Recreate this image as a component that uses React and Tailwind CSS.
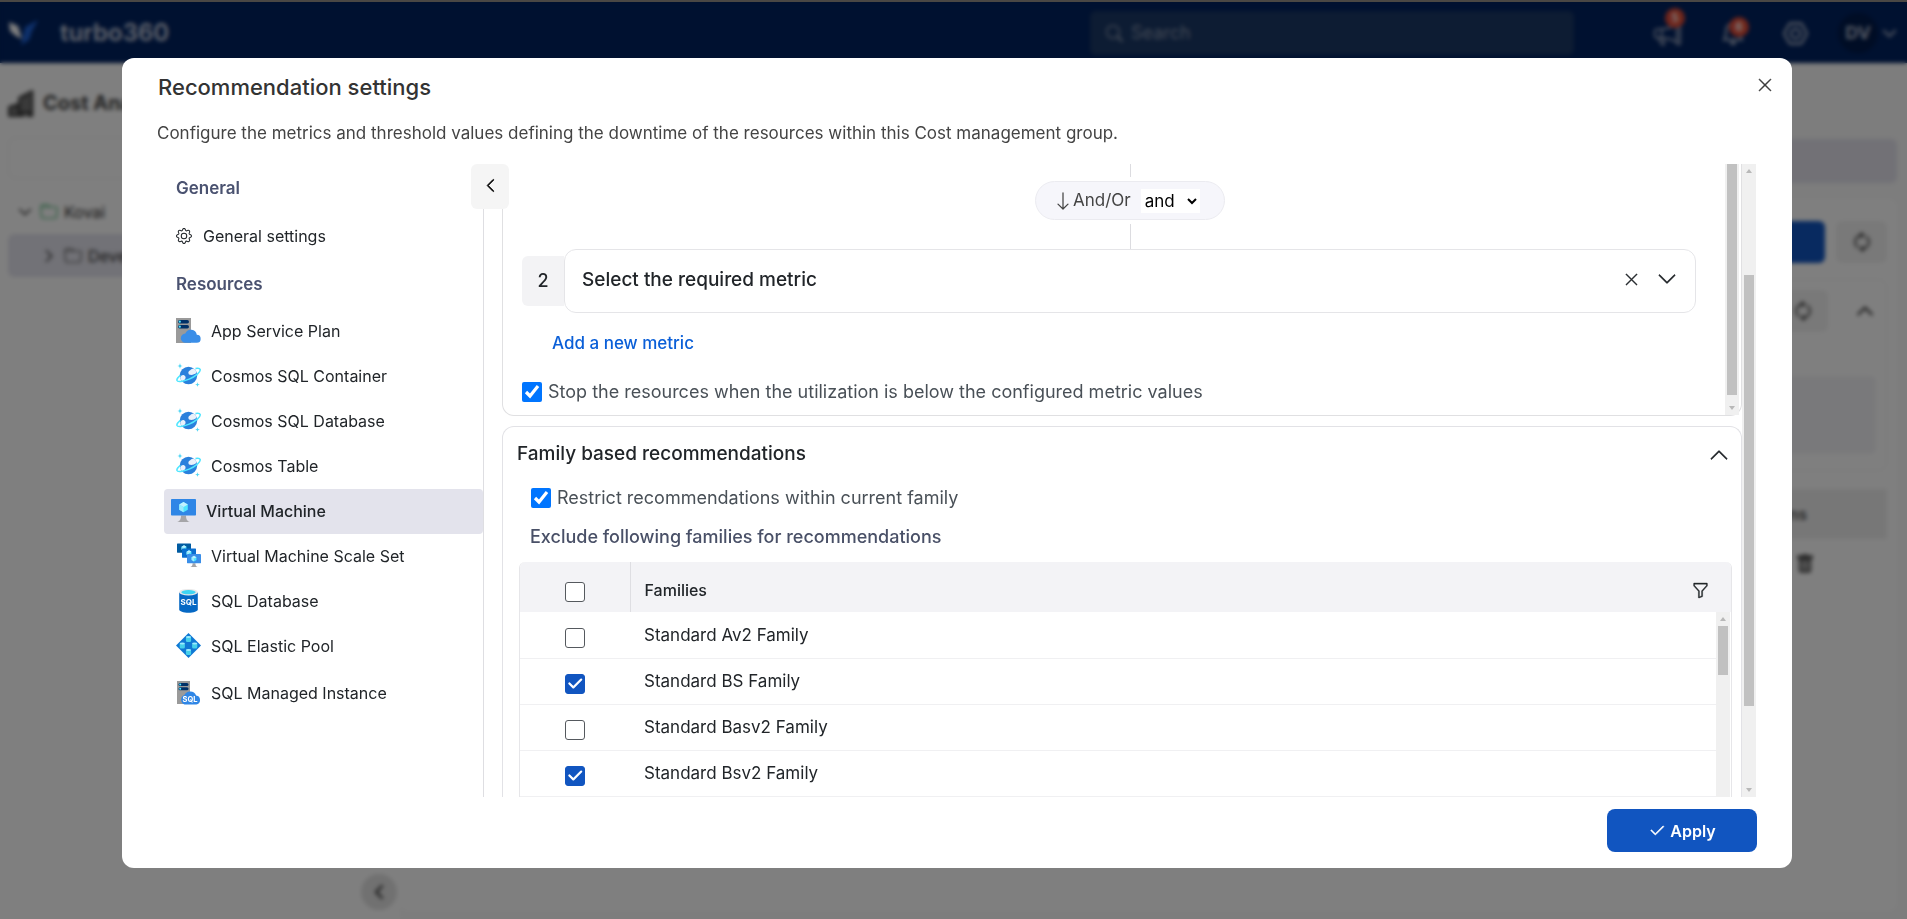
import { useState } from 'react'
import {
  BsArrowDown, BsCheck2, BsChevronDown, BsChevronLeft, BsChevronRight, BsChevronUp,
  BsFolder, BsFunnel, BsGear, BsMegaphone, BsBell, BsNut, BsSearch, BsTrashFill, BsXLg,
  BsArrowRepeat, BsBuildingsFill,
} from 'react-icons/bs'

const resources = [
  { name: 'App Service Plan', icon: AppServiceIcon },
  { name: 'Cosmos SQL Container', icon: CosmosIcon },
  { name: 'Cosmos SQL Database', icon: CosmosIcon },
  { name: 'Cosmos Table', icon: CosmosIcon },
  { name: 'Virtual Machine', icon: VmIcon },
  { name: 'Virtual Machine Scale Set', icon: ScaleSetIcon },
  { name: 'SQL Database', icon: SqlDbIcon },
  { name: 'SQL Elastic Pool', icon: ElasticPoolIcon },
  { name: 'SQL Managed Instance', icon: ManagedInstanceIcon },
]

const families = [
  { name: 'Standard Av2 Family', excluded: false },
  { name: 'Standard BS Family', excluded: true },
  { name: 'Standard Basv2 Family', excluded: false },
  { name: 'Standard Bsv2 Family', excluded: true },
]

export default function App() {
  return (
    <div className="relative h-screen overflow-hidden bg-white font-['Inter',sans-serif] text-[#212529]">
      <Page />
      <div className="absolute inset-x-0 top-0 h-0.5 bg-[#4a4744]" />
      <div className="absolute inset-x-0 top-0.5 bottom-0 flex bg-black/50 pt-14 pr-[115px] pb-[51px] pl-[122px] backdrop-blur-[2px]">
        <SettingsDialog />
      </div>
    </div>
  )
}

function SettingsDialog() {
  const [selected, setSelected] = useState('Virtual Machine')

  return (
    <section role="dialog" aria-labelledby="dialog-title" className="flex min-w-0 flex-1 flex-col rounded-xl bg-white">
      <header className="flex items-center justify-between pt-[11px] pr-[19px] pl-9">
        <h1 id="dialog-title" className="text-[22px] leading-9 font-medium text-[#333]">Recommendation settings</h1>
        <button aria-label="Close" className="pb-1 text-[#333]"><BsXLg size={16} strokeWidth={0.5} /></button>
      </header>
      <p className="mt-3.5 pl-[35px] text-[17px] leading-7 text-[#444]">
        Configure the metrics and threshold values defining the downtime of the resources within this Cost management group.
      </p>

      <div className="mt-[17px] flex min-h-0 flex-1 pr-9 pl-[42px]">
        <Sidebar selected={selected} onSelect={setSelected} />
        <div className="flex min-w-0 flex-1 flex-col overflow-hidden pl-[18px]">
          <MetricsCard />
          <FamiliesCard />
        </div>
        <Scrollbar before={97} thumb={431} />
      </div>

      <footer className="flex justify-end px-[35px] pt-3 pb-4">
        <button className="flex h-[43px] w-[150px] items-center justify-center gap-1 rounded-lg bg-[#1155c0] text-base font-semibold text-white">
          <BsCheck2 size={18} strokeWidth={0.5} /> Apply
        </button>
      </footer>
    </section>
  )
}

function Sidebar({ selected, onSelect }) {
  return (
    <div className="relative w-80 shrink-0">
      <nav className="h-full border-r border-[#dedee2] text-base">
        <h2 className="pl-3 text-[17px] leading-[48px] font-semibold text-[#4a5270]">General</h2>
        <button className="flex h-[50px] w-full items-center gap-[11px] pb-0.5 pl-3"><BsGear size={16} /> General settings</button>
        <h2 className="pl-3 text-[17px] leading-[45px] font-semibold text-[#4a5270]">Resources</h2>
        <ul className="mt-0.5">
          {resources.map(({ name, icon: Icon }) => (
            <li key={name} className="last:pt-0.5">
              <button
                onClick={() => onSelect(name)}
                className={`flex h-[45px] w-full items-center gap-[10px] rounded-sm pb-0.5 ${name === selected ? 'bg-[#e3e3ec] pl-[7px] font-medium' : 'pl-3'}`}
              >
                <Icon /> {name}
              </button>
            </li>
          ))}
        </ul>
      </nav>
      <button aria-label="Collapse" className="absolute top-0 -right-[25px] z-10 flex h-[45px] w-[38px] items-center justify-center rounded-md bg-[#f5f5f5] pb-0.5 text-black">
        <BsChevronLeft size={15} strokeWidth={0.8} />
      </button>
    </div>
  )
}

function MetricsCard() {
  return (
    <div className="flex h-[252px] shrink-0 rounded-b-xl border-x border-b border-[#e0e0e2] pr-0.5">
      <div className="min-w-0 flex-1 pr-[29px] pl-[19px]">
        <div className="flex flex-col items-center pl-[42px]">
          <div className="h-[13px] w-px bg-[#dcdce0]" />
          <div className="my-1 flex h-[39px] w-[190px] items-center rounded-full border border-[#ebebf0] bg-[#f6f6fb] pl-[17px] text-[#444]">
            <BsArrowDown size={20} />
            <label htmlFor="operator" className="text-[17px]">And/Or</label>
            <select id="operator" defaultValue="and" className="ml-[10px] h-6 w-[59px] bg-white text-[17px] text-black">
              <option>and</option>
              <option>or</option>
            </select>
          </div>
          <div className="h-[25px] w-px bg-[#dcdce0]" />
        </div>
        <div className="flex items-center">
          <span className="flex h-[50px] w-[42px] items-center justify-center rounded-l-md bg-[#f3f3f5] text-lg font-medium">2</span>
          <div className="flex h-16 flex-1 items-center rounded-xl border border-[#e5e5e8] pr-[18px] pb-0.5 pl-[17px]">
            <span className="flex-1 text-[19px] font-medium">Select the required metric</span>
            <button aria-label="Remove metric" className="mr-[18px] pb-0.5"><BsXLg size={15} strokeWidth={0.5} /></button>
            <button aria-label="Expand metric" className="pb-0.5"><BsChevronDown size={20} strokeWidth={0.4} /></button>
          </div>
        </div>
        <a href="#add" className="ml-[30px] inline-block text-[17px] leading-[60px] font-medium text-[#0a5fd8]">Add a new metric</a>
        <label className="mt-[5px] flex items-center gap-[6px] text-lg text-[#495057]">
          <input type="checkbox" defaultChecked className="size-5 shrink-0 accent-[#0075ff]" />
          Stop the resources when the utilization is below the configured metric values
        </label>
      </div>
      <Scrollbar before={0} thumb={231} top={false} />
    </div>
  )
}

function FamiliesCard() {
  return (
    <div className="mt-[10px] shrink-0 rounded-t-xl border border-b-0 border-[#e2e2e6] px-[9px]">
      <div className="flex h-[57px] items-center justify-between pr-[3px] pb-0.5 pl-[5px]">
        <h2 className="text-[19px] font-medium">Family based recommendations</h2>
        <button aria-label="Collapse section"><BsChevronUp size={20} strokeWidth={0.4} /></button>
      </div>
      <label className="ml-[19px] flex h-7 items-center gap-[6px] text-lg text-[#495057]">
        <input type="checkbox" defaultChecked className="size-5 accent-[#0075ff]" />
        Restrict recommendations within current family
      </label>
      <p className="ml-[18px] text-lg leading-[50px] font-medium text-[#495067]">Exclude following families for recommendations</p>
      <div className="ml-[7px] overflow-hidden rounded-t-md border-x border-[#e6e6e9]">
        <div className="flex">
          <table className="flex-1 border-collapse text-left text-[17px]">
            <thead>
              <tr className="h-[50px] bg-[#f3f3f6]">
                <th className="w-[110px] border-r border-[#dedee2] pt-2.5 pl-[45px]"><TickBox label="Select all families" /></th>
                <th className="pt-1.5 pl-[14px] text-base font-medium">Families</th>
              </tr>
            </thead>
            <tbody>
              {families.map((f) => (
                <tr key={f.name} className="h-[46px] border-b border-[#f0f0f2]">
                  <td className="pt-1.5 pl-[45px]"><TickBox label={f.name} checked={f.excluded} /></td>
                  <td className="pt-0.5 pl-[14px]">{f.name}</td>
                </tr>
              ))}
            </tbody>
          </table>
          <div className="flex flex-col">
            <div className="flex h-[50px] items-center bg-[#f3f3f6] pt-1.5">
              <button aria-label="Filter" className="-ml-6 pr-[22px]"><BsFunnel size={17} strokeWidth={0.4} /></button>
            </div>
            <div className="flex flex-1">
              <Scrollbar before={0} thumb={49} bottom={false} />
            </div>
          </div>
        </div>
      </div>
    </div>
  )
}

function TickBox({ label, checked = false }) {
  return (
    <span className="grid w-5">
      <input
        type="checkbox"
        aria-label={label}
        defaultChecked={checked}
        className="peer col-start-1 row-start-1 size-5 appearance-none rounded-[3px] border border-[#55595e] bg-white checked:border-[#1155c0] checked:bg-[#1155c0]"
      />
      <BsCheck2 size={18} strokeWidth={0.9} className="pointer-events-none invisible col-start-1 row-start-1 place-self-center text-white peer-checked:visible" />
    </span>
  )
}

function Scrollbar({ before, thumb, top = true, bottom = true }) {
  return (
    <div aria-hidden="true" className="flex w-[14px] flex-none flex-col items-center bg-[#f0f0f0]">
      {top && <Arrow points="0,4 3,0 6,4" />}
      <div className="flex w-[10px] flex-1 flex-col">
        <div style={{ height: before }} />
        <div className="bg-[#c1c1c1]" style={{ height: thumb }} />
      </div>
      {bottom && <Arrow points="0,0 3,4 6,0" />}
    </div>
  )
}

function Arrow({ points }) {
  return (
    <span className="flex h-[14px] items-center">
      <svg width="6" height="4" viewBox="0 0 6 4"><polygon points={points} fill="#b8b8b8" /></svg>
    </span>
  )
}

/* Cost page behind the dialog */

function Page() {
  return (
    <div className="flex h-full flex-col" aria-hidden="true">
      <header className="flex h-[63px] shrink-0 items-center bg-[#002260] pt-[3px] pl-2 text-white">
        <svg width="30" height="28" viewBox="0 0 30 28">
          <path d="M1 3l9 4 4 13-6-3-6-5z" fill="#fff" />
          <path d="M30 1L17 8l-4 18 8-5 3-9z" fill="#1d62d8" />
        </svg>
        <span className="ml-[22px] text-2xl font-semibold text-[#c8cede]">turbo360</span>
        <div className="mr-20 ml-auto flex h-11 w-[484px] items-center gap-2 rounded-md bg-[#1a3866] pl-4 text-[#8693ab]">
          <BsSearch size={17} strokeWidth={0.5} />
          <span className="text-lg">Search</span>
        </div>
        <div className="flex items-center text-[#a9b3c8]">
          <span className="relative"><BsMegaphone size={27} /><Badge className="-top-3 -right-1">5</Badge></span>
          <span className="relative ml-10"><BsBell size={24} strokeWidth={0.4} /><Badge className="-top-1 -right-1">6</Badge></span>
          <BsNut size={25} strokeWidth={0.6} className="ml-[38px]" />
          <span className="ml-[30px] flex size-10 items-center justify-center rounded-full bg-[#001a4a] text-lg font-bold">DV</span>
          <BsChevronDown size={15} strokeWidth={1.2} className="mr-[10px] ml-1" />
        </div>
      </header>
      <div className="flex min-h-0 flex-1">
        <aside className="flex w-[400px] flex-col pl-2 text-[#333]">
          <div className="mt-[22px] flex h-9 items-center gap-2 text-xl font-bold text-[#444]"><BsBuildingsFill size={27} /> Cost Analysis</div>
          <div className="mt-4 h-[42px] rounded-lg border border-[#ececec]" />
          <div className="mt-[11px] flex h-11 items-center pl-2.5"><BsChevronDown size={14} strokeWidth={1} /><BsFolder size={18} className="mr-1.5 ml-2 text-[#3fae6a]" />Kovai</div>
          <div className="flex h-[43px] items-center rounded-md bg-[#e4e4ee] pl-[34px]"><BsChevronRight size={14} strokeWidth={1} /><BsFolder size={18} className="mr-1.5 ml-2 text-[#555]" />Development</div>
          <div className="mt-auto mr-[3px] mb-[9px] flex size-9 items-center justify-center self-end rounded-full bg-[#e2e2e2]"><BsChevronLeft size={16} strokeWidth={1.2} /></div>
        </aside>
        <main className="flex min-w-0 flex-1 flex-col bg-[#fafafa] pr-2.5 pb-2">
          <div className="mt-[76px] h-11 rounded-md bg-[#e4e3ed]" />
          <div className="mt-4 flex-1 rounded-lg bg-white px-2.5 pt-[22px]">
            <div className="flex justify-end gap-[11px]">
              <div className="h-[42px] w-40 rounded-md bg-[#1155c0]" />
              <div className="flex h-[42px] w-[51px] items-center justify-center rounded-md bg-[#f2f2f2] text-[#444]"><BsArrowRepeat size={20} strokeWidth={0.5} className="rotate-90" /></div>
            </div>
            <div className="mt-4 rounded-lg border border-[#f3f3f3] px-2.5 pt-2.5 pb-4">
              <div className="flex items-center justify-end gap-7 pr-0.5 text-[#444]">
                <div className="flex h-[42px] w-[50px] items-center justify-center rounded-md bg-[#f2f2f2]"><BsArrowRepeat size={20} strokeWidth={0.5} className="rotate-90" /></div>
                <BsChevronUp size={18} strokeWidth={1} />
              </div>
              <div className="mt-11 h-[78px] rounded-md bg-[#f3f3f6]" />
            </div>
            <div className="mt-[18px] flex h-[50px] items-center justify-end bg-[#efefef] pr-20 font-semibold text-[#555]">Actions</div>
            <div className="flex justify-end pt-[15px] pr-[72px] text-[#555]"><BsTrashFill size={20} /></div>
          </div>
        </main>
      </div>
    </div>
  )
}

function Badge({ className, children }) {
  return (
    <span className={`absolute flex size-5 items-center justify-center rounded-full bg-[#e04a35] text-xs font-semibold text-white ${className}`}>
      {children}
    </span>
  )
}

/* Azure resource icons */

function AppServiceIcon() {
  return (
    <svg width="25" height="25" viewBox="0 0 25 25" className="shrink-0">
      <path d="M0 0h15v25H0z" fill="#9a9a9a" />
      <rect x="2" y="2" width="11" height="3.4" rx="1.7" fill="#003067" />
      <rect x="2" y="7" width="11" height="3.4" rx="1.7" fill="#003067" />
      <circle cx="3.8" cy="3.7" r="1.1" fill="#50e6ff" />
      <circle cx="3.8" cy="8.7" r="1.1" fill="#50e6ff" />
      <path d="M9.5 24.8a4.6 4.6 0 0 1-.2-9.2 6 6 0 0 1 11.5 1.2 4 4 0 0 1-.3 8z" fill="#3a8ee8" />
    </svg>
  )
}

function CosmosIcon() {
  return (
    <svg width="25" height="25" viewBox="0 0 25 25" className="shrink-0">
      <circle cx="12.5" cy="12.5" r="8.7" fill="#2a80dc" />
      <path d="M4.2 15a3 3 0 0 1 3.4-3 2.6 2.6 0 0 1 1.2 4.4l-2.6 2A8.6 8.6 0 0 1 4.2 15zM13 11.5a2.6 2.6 0 0 1 1.2-4.2 3 3 0 0 1 5.2-.2 8.7 8.7 0 0 1 .9 2.8c-2 1.6-4.5 2.6-7.3 1.6z" fill="#e9f1fb" />
      <path d="M19.5 5.6c2.7-.5 4.4-.2 4.7.9.6 2.3-4.4 6.8-11 9.6C7 18.7 1.4 19.4.9 17.4c-.3-1.3 1-3.2 3.5-5.1" fill="none" stroke="#50e6ff" strokeWidth="1.5" />
      <path d="M4 0c.3 2.2.8 2.7 2.8 3C4.8 3.3 4.3 3.8 4 6 3.7 3.8 3.2 3.3 1.2 3 3.2 2.7 3.7 2.2 4 0zM21.5 19c.3 2 .7 2.3 2.5 2.5-1.8.3-2.2.7-2.5 2.5-.3-1.8-.7-2.2-2.5-2.5 1.8-.2 2.2-.5 2.5-2.5z" fill="#50d6f5" />
    </svg>
  )
}

function VmScreen({ x = 0, y = 0, size = 25, color = '#2f86e6' }) {
  return (
    <svg x={x} y={y} width={size} height={size} viewBox="0 0 25 25">
      <rect x="0" y="1" width="25" height="16.5" rx=".8" fill={color} />
      <path d="M12.5 4l4.3 2.5v5.3l-4.3 2.5-4.3-2.5V6.5z" fill="#50e6ff" />
      <path d="M12.5 4l4.3 2.5L12.5 9 8.2 6.5z" fill="#c3f1ff" />
      <path d="M12.5 9v5.3l-4.3-2.5V6.5z" fill="#9cebff" />
    </svg>
  )
}

function VmStand({ transform }) {
  return <path transform={transform} d="M10 17.5h5c0 4 1.2 5.6 4 6.5H6c2.8-.9 4-2.5 4-6.5z" fill="#a5a5a8" />
}

function VmIcon() {
  return (
    <svg width="25" height="25" viewBox="0 0 25 25" className="shrink-0">
      <VmStand />
      <VmScreen />
    </svg>
  )
}

function ScaleSetIcon() {
  return (
    <svg width="25" height="25" viewBox="0 0 25 25" className="shrink-0">
      <VmScreen x={1} y={0} size={14} color="#005ba1" />
      <VmScreen x={6} y={5} size={14} color="#0a6fd0" />
      <VmStand transform="translate(11 10.5) scale(.56)" />
      <VmScreen x={11} y={10.5} size={14} color="#3a8ee8" />
    </svg>
  )
}

function SqlDbIcon() {
  return (
    <svg width="25" height="25" viewBox="0 0 25 25" className="shrink-0">
      <path d="M3.2 4v17.5c0 1.7 4.2 3.2 9.3 3.2s9.3-1.5 9.3-3.2V4z" fill="#0568c4" />
      <ellipse cx="12.5" cy="4.2" rx="9.3" ry="3.3" fill="#e8e8e8" />
      <ellipse cx="12.5" cy="4.2" rx="7.2" ry="2.1" fill="#3fd5f3" />
      <text x="12.5" y="16.8" textAnchor="middle" fontSize="8" fontWeight="700" fill="#fff">SQL</text>
    </svg>
  )
}

function ElasticPoolIcon() {
  return (
    <svg width="25" height="25" viewBox="0 0 25 25" className="shrink-0">
      <path d="M12.5 0L25 12.5 12.5 25 0 12.5z" fill="#0f78d4" />
      {[[12.5, 6], [6.3, 12.5], [18.7, 12.5], [12.5, 19]].map(([x, y]) => (
        <g key={`${x}-${y}`}>
          <rect x={x - 2.6} y={y - 2.6} width="5.2" height="5.6" rx="1.5" fill="#45d0ea" />
          <ellipse cx={x} cy={y - 2} rx="2.6" ry="1" fill="#9cebff" />
        </g>
      ))}
    </svg>
  )
}

function ManagedInstanceIcon() {
  return (
    <svg width="25" height="25" viewBox="0 0 25 25" className="shrink-0">
      <path d="M1 1h13v23H1z" fill="#9a9a9a" />
      <rect x="2.5" y="3" width="10" height="3" rx="1.5" fill="#003067" />
      <rect x="2.5" y="7.3" width="10" height="3" rx="1.5" fill="#003067" />
      <circle cx="4.2" cy="4.5" r="1" fill="#50e6ff" />
      <circle cx="4.2" cy="8.8" r="1" fill="#50e6ff" />
      <path d="M8.5 24.5a5 5 0 0 1-.1-9.4 6.4 6.4 0 0 1 11.7.5 4.5 4.5 0 0 1 .2 8.9z" fill="#2f86e6" />
      <text x="14" y="22" textAnchor="middle" fontSize="7.5" fontWeight="700" fill="#fff">SQL</text>
    </svg>
  )
}
